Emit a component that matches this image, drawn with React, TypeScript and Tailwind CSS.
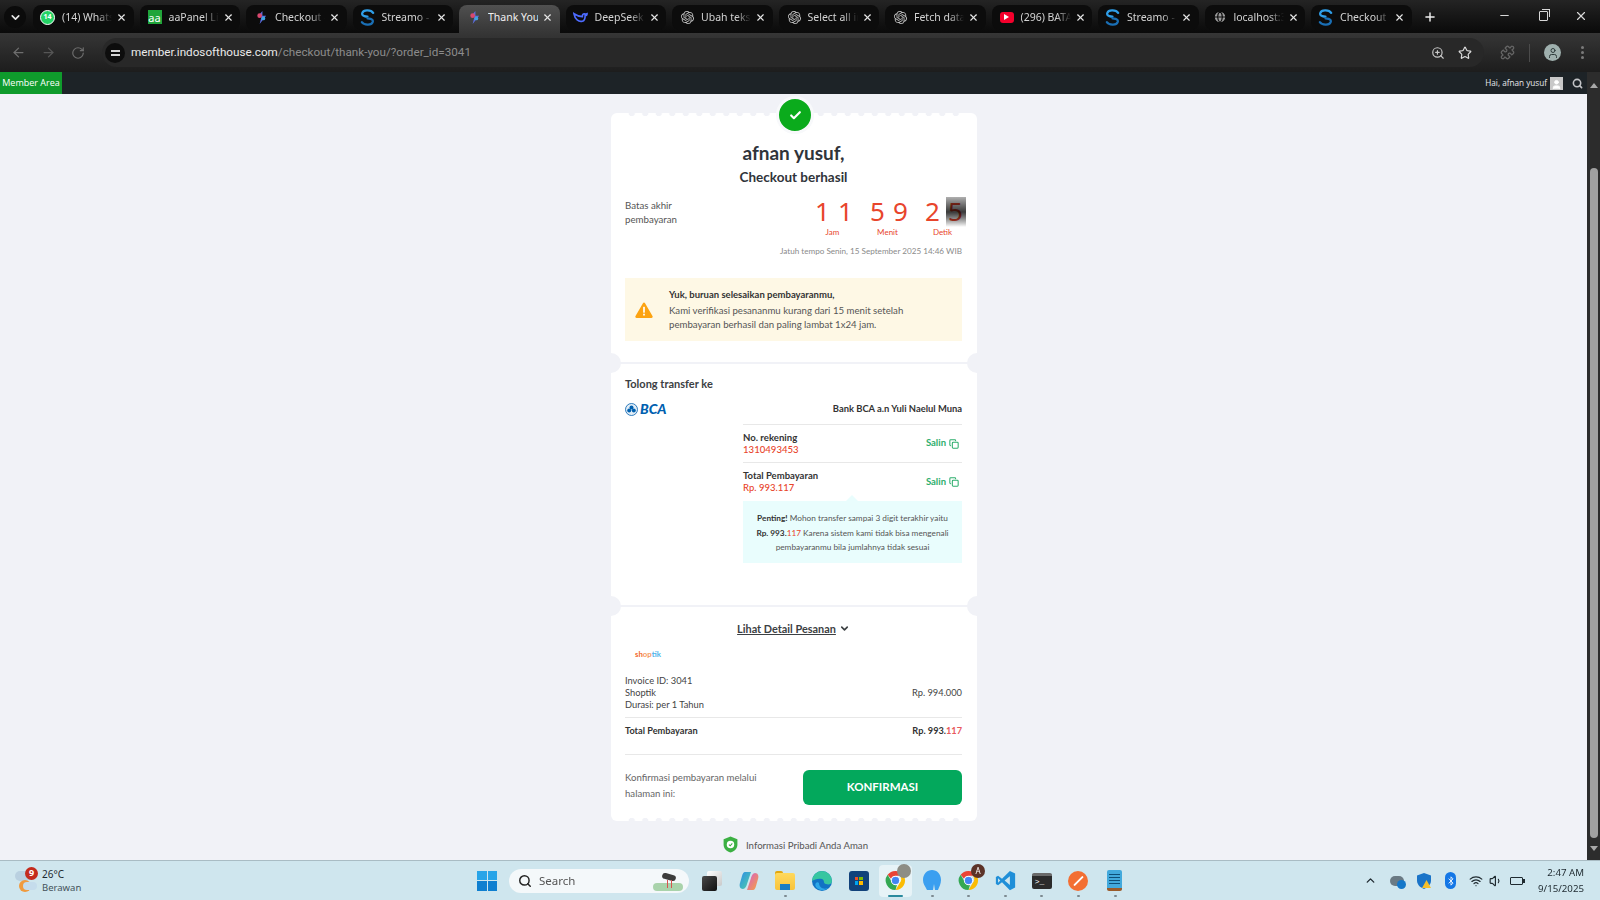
import React from "react";
import { ArrowLeft, ArrowRight, ChevronDown, ChevronUp, Copy, Globe, Plus, RotateCw, Search, Star, User, Volume1, Wifi, X, ZoomIn, Puzzle, Check, Bluetooth, Minus } from "lucide-react";
import { SiOpenai } from "react-icons/si";

const body = "font-['Lato','Noto_Sans',sans-serif]";

function ChromeIcon({ size = 24 }: { size?: number }) {
  return (
    <svg width={size} height={size} viewBox="0 0 48 48">
      <path d="M24 4a20 20 0 0 1 17.3 10H24a10 10 0 0 0-9.4 6.6L7.6 11.9A20 20 0 0 1 24 4z" fill="#ea4335" />
      <path d="M41.3 14A20 20 0 0 1 24 44l8.7-15a10 10 0 0 0 0-15z" fill="#fbbc04" />
      <path d="M7.6 11.9 16 26.6A10 10 0 0 0 27 33.5L24 44A20 20 0 0 1 7.6 11.9z" fill="#34a853" />
      <circle cx="24" cy="24" r="8.5" fill="#4285f4" stroke="#fff" strokeWidth="2" />
    </svg>
  );
}

function StreamoIcon() {
  return (
    <svg width="15" height="17" viewBox="0 0 16 18" fill="none">
      <path d="M14 4C12 1 4 0 2.5 4S8 8 8 8" stroke="#2f9ee8" strokeWidth="2.4" strokeLinecap="round" />
      <path d="M2 14c2 3 10 4 11.5 0S8 10 8 10" stroke="#1a6fb5" strokeWidth="2.4" strokeLinecap="round" />
    </svg>
  );
}

function CheckoutIcon() {
  return (
    <svg width="13" height="15" viewBox="0 0 14 16">
      <path d="M8 1 3 7h4l-2 8 7-9H8z" fill="#5b6ee1" />
      <circle cx="5" cy="6" r="2.5" fill="#d9486e" />
      <circle cx="9" cy="9" r="2" fill="#3da5e0" />
    </svg>
  );
}

const tabs: { title: string; icon: React.ReactNode; active?: boolean }[] = [
  {
    title: "(14) WhatsApp",
    icon: <div className="w-[15px] h-[15px] rounded-full bg-[#25d366] border-[1.5px] border-white flex items-center justify-center text-[7px] font-bold text-white">14</div>,
  },
  {
    title: "aaPanel Linux",
    icon: <div className="w-[14px] h-[14px] bg-[#20a53a] flex items-center justify-center text-[11px] leading-none text-white">aa</div>,
  },
  { title: "Checkout - Shoptik", icon: <CheckoutIcon /> },
  { title: "Streamo - Web", icon: <StreamoIcon /> },
  { title: "Thank You", icon: <CheckoutIcon />, active: true },
  {
    title: "DeepSeek",
    icon: (
      <svg width="15" height="13" viewBox="0 0 16 14" fill="none">
        <path d="M1 3c1 6 5 9 9 8 2-.5 3-3 3-6 1 0 2-1 2-2-1 .5-2 .5-3 0-1 0-2 1-2 3-2 0-6-1-9-3z" stroke="#4d6bfe" strokeWidth="1.8" />
      </svg>
    ),
  },
  { title: "Ubah teks ke kode", icon: <SiOpenai size={13} color="#c4c4c4" /> },
  { title: "Select all in code", icon: <SiOpenai size={13} color="#c4c4c4" /> },
  { title: "Fetch data from", icon: <SiOpenai size={13} color="#c4c4c4" /> },
  {
    title: "(296) BATAS",
    icon: (
      <div className="w-[14px] h-[11px] bg-[#f5002c] rounded-[3px] flex items-center justify-center">
        <div className="w-0 h-0 border-y-[3px] border-y-transparent border-l-[5px] border-l-white" />
      </div>
    ),
  },
  { title: "Streamo - Web", icon: <StreamoIcon /> },
  { title: "localhost:3000", icon: <Globe size={14} color="#0b0b0b" fill="#9a9a9a" /> },
  { title: "Checkout Streamo", icon: <StreamoIcon /> },
];

const taskbarIcons: { icon: React.ReactNode; dot?: boolean; active?: boolean }[] = [
  {
    icon: (
      <div className="relative w-5 h-5">
        <div className="absolute left-[5px] top-0 w-[15px] h-[15px] rounded-[2px] bg-gradient-to-br from-white to-[#c9c9c9]" />
        <div className="absolute left-0 top-[5px] w-[15px] h-[15px] rounded-[2px] bg-gradient-to-br from-[#4a4a4a] to-[#111]" />
      </div>
    ),
  },
  {
    icon: (
      <svg width="22" height="22" viewBox="0 0 22 22">
        <defs>
          <linearGradient id="cp1" x1="0" y1="0" x2="1" y2="1"><stop offset="0" stopColor="#2c8ee8" /><stop offset="1" stopColor="#53d1a5" /></linearGradient>
          <linearGradient id="cp2" x1="0" y1="0" x2="1" y2="1"><stop offset="0" stopColor="#d65ad0" /><stop offset="1" stopColor="#f6a43b" /></linearGradient>
        </defs>
        <path d="M7 2h6l-4 12c-.5 2-2 5-4 5-3 0-4-3-3-6l2-7c.5-2 1.500-4 3-4z" fill="url(#cp1)" />
        <path d="M15 20H9l4-12c.5-2 2-5 4-5 3 0 4 3 3 6l-2 7c-.5 2-1.500 4-3 4z" fill="url(#cp2)" />
      </svg>
    ),
  },
  {
    dot: true,
    icon: (
      <div className="relative w-5 h-[19px]">
        <div className="absolute top-0 left-0 w-2 h-1 rounded-t-[2px] bg-[#e2a70f]" />
        <div className="absolute top-[2px] left-0 w-5 h-[17px] rounded-[2px] bg-gradient-to-b from-[#ffd95c] to-[#f8c33a]" />
        <div className="absolute bottom-0 left-[5px] w-[10px] h-[6px] bg-[#1a7dc4]" />
      </div>
    ),
  },
  {
    icon: (
      <svg width="22" height="22" viewBox="0 0 22 22">
        <circle cx="11" cy="11" r="10" fill="#1173c4" />
        <path d="M1 11a10 10 0 0 1 20 0c0 3-3 4-6 3-3 0-1-4-4-5-4-1-8 1-10 2z" fill="#37c6a0" />
        <path d="M8 13c0 4 4 7 9 5-3 3-9 3-12-1-2-3 1-6 3-4z" fill="#2ca7e8" />
      </svg>
    ),
  },
  {
    icon: (
      <div className="w-5 h-5 rounded-[3px] bg-[#11427b] flex items-center justify-center">
        <div className="grid grid-cols-2 gap-px w-2 h-2">
          <div className="bg-[#f25022]" />
          <div className="bg-[#7fba00]" />
          <div className="bg-[#00a4ef]" />
          <div className="bg-[#ffb900]" />
        </div>
      </div>
    ),
  },
  {
    active: true,
    icon: (
      <div className="relative">
        <ChromeIcon size={23} />
        <div className="absolute -top-[5px] -right-[4px] w-[14px] h-[14px] rounded-full bg-[#8d8d85]" />
      </div>
    ),
  },
  {
    dot: true,
    icon: (
      <svg width="20" height="24" viewBox="0 0 20 24">
        <path d="M10 1c5 0 9 4 9 10 0 4-2 7-3 10h-3l-1-6-1 6H5C3 17 1 15 1 11 1 5 5 1 10 1z" fill="#3b9ff0" />
      </svg>
    ),
  },
  {
    dot: true,
    icon: (
      <div className="relative">
        <ChromeIcon size={23} />
        <div className="absolute -top-[5px] -right-[5px] w-[14px] h-[14px] rounded-full bg-[#5b3328] flex items-center justify-center text-[8px] text-white">A</div>
      </div>
    ),
  },
  {
    dot: true,
    icon: (
      <svg width="21" height="21" viewBox="0 0 24 24">
        <path d="M17 1 8 10 3.500 6.500 1 8v8l2.500 1.500L8 14l9 9 6-3V4z" fill="#1f8fd8" />
        <path d="M17 7v10l-6-5z" fill="#cfe6ee" />
        <path d="M3.500 9.500v5L6 12z" fill="#cfe6ee" />
      </svg>
    ),
  },
  {
    dot: true,
    icon: (
      <div className="w-5 h-[16px] rounded-[2px] bg-[#2b2b2b] border-t-[3px] border-[#6a6a6a] flex items-center px-[3px] text-[8px] leading-none text-white font-mono">
        &gt;_
      </div>
    ),
  },
  {
    dot: true,
    icon: (
      <div className="w-5 h-5 rounded-full bg-[#f36f33] flex items-center justify-center">
        <div className="w-[13px] h-[2px] bg-white rotate-[-45deg] rounded" />
      </div>
    ),
  },
  {
    dot: true,
    icon: (
      <div className="w-[15px] h-[21px] rounded-[2px] bg-[#42a9dc] flex flex-col justify-end gap-[2px] pb-[4px] px-[2px] border-b-[3px] border-[#9a5b2a]">
        <div className="h-px bg-[#0d4f78]" />
        <div className="h-px bg-[#0d4f78]" />
        <div className="h-px bg-[#0d4f78]" />
        <div className="h-px bg-[#0d4f78]" />
      </div>
    ),
  },
];

function TabStrip() {
  return (
    <div className="h-[33px] flex items-end bg-gradient-to-b from-[#242424] to-[#0a0a0a] font-['Noto_Sans',sans-serif]">
      <div className="w-[30px] h-[28px] pb-[4px] flex items-center justify-center">
        <div className="w-[22px] h-[22px] rounded-full bg-[#0b0b0b] flex items-center justify-center">
          <ChevronDown size={13} strokeWidth={3} color="#e6e6e6" />
        </div>
      </div>
      {tabs.map((tab, i) => (
        <div key={i} className="w-[106.5px] h-[28px] relative flex items-center pb-[4px]">
          <div className={tab.active ? "absolute inset-x-[3px] inset-y-0 rounded-t-lg bg-gradient-to-b from-[#505050] to-[#363636]" : "absolute inset-x-[3px] top-0 bottom-[3px] rounded-lg bg-[#0c0c0c]"} />
          <div className="relative w-[28px] flex items-center justify-end pr-[3px]">{tab.icon}</div>
          <div className={`relative ml-[4px] w-[50px] overflow-hidden whitespace-nowrap text-[10.5px] leading-[14px] ${tab.active ? "text-[#f0f0f0]" : "text-[#d4d4d4] [mask-image:linear-gradient(to_right,black_70%,transparent)]"}`}>
            {tab.title}
          </div>
          <div className="relative ml-[4px]">
            <X size={11} strokeWidth={2.5} color="#e5e5e5" />
          </div>
        </div>
      ))}
      <div className="h-[28px] w-[30px] pb-[4px] flex items-center justify-center">
        <Plus size={14} strokeWidth={2.5} color="#eeeeee" />
      </div>
      <div className="ml-auto h-full flex items-center text-[#d8d8d8] pb-[2px]">
        <div className="w-[39px] flex justify-center"><Minus size={13} /></div>
        <div className="w-[38px] flex justify-center">
          <div className="relative w-[9px] h-[10px] border border-[#d8d8d8] rounded-[1px]">
            <div className="absolute -top-[3px] -right-[3px] w-[8px] h-[8px] border-t border-r border-[#d8d8d8]" />
          </div>
        </div>
        <div className="w-[38px] flex justify-center"><X size={14} /></div>
      </div>
    </div>
  );
}

function Toolbar() {
  return (
    <div className="h-[39px] flex items-center bg-gradient-to-b from-[#363636] to-[#1d1d1d] font-['Roboto',sans-serif]">
      <div className="w-[102px] flex items-center pl-[11px] gap-[15px]">
        <ArrowLeft size={15} color="#6e6e6e" />
        <ArrowRight size={15} color="#565656" />
        <RotateCw size={14} color="#6e6e6e" />
      </div>
      <div className="w-[1382px] h-[29px] rounded-full bg-[#282828] flex items-center pl-[2px]">
        <div className="w-[20px] h-[20px] ml-[1px] rounded-full bg-[#0d0d0d] flex flex-col items-center justify-center gap-[2px]">
          <div className="w-[9px] h-[2px] bg-[#d6d6d6]" />
          <div className="w-[9px] h-[2px] bg-[#d6d6d6]" />
        </div>
        <div className="ml-[6px] text-[11.7px] text-[#8c8c8c]">
          <span className="text-[#eaeaea]">member.indosofthouse.com</span>/checkout/thank-you/?order_id=3041
        </div>
        <div className="ml-auto flex items-center gap-[13px] pr-[12px]">
          <ZoomIn size={14} color="#c9c9c9" />
          <Star size={14} color="#dcdcdc" />
        </div>
      </div>
      <div className="flex items-center">
        <div className="ml-[16px]"><Puzzle size={15} color="#666666" /></div>
        <div className="ml-[14px] w-px h-[18px] bg-[#4b4b4b]" />
        <div className="ml-[14px] w-[17px] h-[17px] rounded-full bg-[#9fb0ae] flex items-center justify-center">
          <User size={12} color="#2d3a3a" />
        </div>
        <div className="ml-[20px] flex flex-col gap-[2px]">
          <div className="w-[3px] h-[3px] rounded-full bg-[#7a7a7a]" />
          <div className="w-[3px] h-[3px] rounded-full bg-[#7a7a7a]" />
          <div className="w-[3px] h-[3px] rounded-full bg-[#7a7a7a]" />
        </div>
      </div>
    </div>
  );
}

function AdminBar() {
  return (
    <div className="h-[22px] flex items-center bg-[#1d2327] font-['Open_Sans',sans-serif]">
      <div className="w-[62px] h-full bg-[#0f9b2c] flex items-center justify-center text-[9px] text-white">Member Area</div>
      <div className="ml-auto flex items-center text-[8.2px] text-[#e8eaec]">
        Hai, afnan yusuf
        <div className="ml-[3px] w-[13px] h-[13px] bg-[#c8c8c8] flex items-end justify-center overflow-hidden">
          <User size={11} color="#ffffff" fill="#ffffff" />
        </div>
        <div className="ml-[9px] mr-[4px]">
          <Search size={11} strokeWidth={3.5} color="#c3c4c7" />
        </div>
      </div>
    </div>
  );
}

function Digit({ value }: { value: string }) {
  return <div className="w-[23px] text-center text-[26px] leading-[28px] text-[#e8452c] font-['Noto_Sans',sans-serif]">{value}</div>;
}

function TimerUnit({ a, b, label }: { a: string; b: string; label: string }) {
  return (
    <div className="w-[46px] flex flex-col items-center">
      <div className="flex">
        <Digit value={a} />
        <Digit value={b} />
      </div>
      <div className="mt-px pr-[3px] text-[8px] leading-[12px] text-[#e8452c]">{label}</div>
    </div>
  );
}

function Notch({ side }: { side: "left" | "right" }) {
  return (
    <div className={side === "left" ? "absolute -left-[10px] -top-[11px] w-5 h-5 rounded-full bg-[#f1f2f7]" : "absolute -right-[10px] -top-[11px] w-5 h-5 rounded-full bg-[#f1f2f7]"} />
  );
}

function Scallop({ edge }: { edge: "top" | "bottom" }) {
  return (
    <div className={edge === "top" ? "absolute top-0 inset-x-[14px] h-[3px] bg-[radial-gradient(circle_at_50%_0,#f1f2f7_3px,transparent_3.5px)] bg-[length:13.5px_3px]" : "absolute bottom-0 inset-x-[14px] h-[3px] bg-[radial-gradient(circle_at_50%_100%,#f1f2f7_3px,transparent_3.5px)] bg-[length:13.5px_3px]"} />
  );
}

function SalinButton() {
  return (
    <div className="flex items-center gap-[3px] pr-[3px] text-[9.5px] font-bold text-[#2eae6d]">
      Salin
      <Copy size={10} strokeWidth={2.5} />
    </div>
  );
}

function Page() {
  return (
    <div className={`flex-1 overflow-hidden bg-[#f1f2f7] pl-px pt-[19px] ${body} text-[#3c4043]`}>
      <div className="relative w-[366px] mx-auto">
        {/* Status check */}
        <div className="absolute left-[165px] -top-[17px] z-10 w-[38px] h-[38px] rounded-full border-[3px] border-[#f8f9fb] bg-[#0bab1c] flex items-center justify-center">
          <Check size={13} strokeWidth={4} color="#ffffff" />
        </div>

        {/* Countdown */}
        <div className="relative bg-white rounded-t-md pl-[14px] pr-[15px] pt-[28px] pb-[21px]">
          <Scallop edge="top" />
          <div className="text-center text-[19px] leading-[24px] font-bold text-[#30343a]">afnan yusuf,</div>
          <div className="mt-[2px] text-center text-[13.5px] leading-[20px] font-bold text-[#30343a]">Checkout berhasil</div>
          <div className="mt-[10px] flex justify-between">
            <div className="pt-px text-[9.7px] leading-[14px] text-[#555555]">
              Batas akhir
              <br />
              pembayaran
            </div>
            <div className="relative flex gap-[9px] -mr-[5px]">
              <TimerUnit a="1" b="1" label="Jam" />
              <TimerUnit a="5" b="9" label="Menit" />
              <TimerUnit a="2" b="5" label="Detik" />
              <div className="absolute right-[1px] top-0 w-[20px] h-[30px] mix-blend-multiply bg-gradient-to-b from-[#b0b0b0] via-[#3a3a3a] to-white" />
            </div>
          </div>
          <div className="mt-[7px] text-right text-[8.15px] leading-[12px] text-[#8a8a8a]">Jatuh tempo Senin, 15 September 2025 14:46 WIB</div>
          <div className="mt-[21px] bg-[#fef8e5] flex items-center py-[10px]">
            <div className="w-[36px] pl-[1px] mr-[8px] flex justify-center">
              <svg width="18" height="16" viewBox="0 0 17 15">
                <path d="M8.500.5a1.200 1.200 0 0 1 1 .6l7 12a1.200 1.200 0 0 1-1 1.900h-14a1.200 1.200 0 0 1-1-1.900l7-12a1.200 1.200 0 0 1 1-.6z" fill="#fca311" />
                <rect x="7.700" y="4.500" width="1.600" height="5.500" fill="#fff" />
                <rect x="7.700" y="11" width="1.600" height="1.700" fill="#fff" />
              </svg>
            </div>
            <div className="text-[9.65px] leading-[14px] text-[#555555]">
              <div className="font-bold text-[9.5px] text-[#333333] mb-px">Yuk, buruan selesaikan pembayaranmu,</div>
              <div>Kami verifikasi pesananmu kurang dari 15 menit setelah</div>
              <div>pembayaran berhasil dan paling lambat 1x24 jam.</div>
            </div>
          </div>
        </div>

        {/* Transfer */}
        <div className="relative mt-[2px] bg-white pl-[14px] pr-[15px] pt-[12px] pb-[42px]">
          <Notch side="left" />
          <Notch side="right" />
          <div className="text-[11px] leading-[16px] font-bold text-[#3c4043]">Tolong transfer ke</div>
          <div className="mt-[9px] h-4 flex items-center justify-between">
            <div className="flex items-center gap-[2px]">
              <svg width="13" height="13" viewBox="0 0 13 13">
                <circle cx="6.500" cy="6.500" r="6" fill="#e3eef7" stroke="#0060af" strokeWidth="0.8" />
                <circle cx="6.500" cy="4.500" r="2" fill="#0060af" />
                <circle cx="4.200" cy="7.500" r="2" fill="#0060af" />
                <circle cx="8.800" cy="7.500" r="2" fill="#0060af" />
              </svg>
              <div className="text-[14px] italic font-black leading-none text-[#0060af]">BCA</div>
            </div>
            <div className="text-[9.4px] font-bold text-[#333333]">Bank BCA a.n Yuli Naelul Muna</div>
          </div>
          <div className="mt-[7px] ml-[118px]">
            <div className="border-t border-[#e8e8e8] py-[7px] flex items-center justify-between">
              <div className="text-[9.6px]">
                <div className="leading-[12px] font-bold text-[#333333]">No. rekening</div>
                <div className="leading-[11px] text-[#e8452c] font-medium">1310493453</div>
              </div>
              <SalinButton />
            </div>
            <div className="border-t border-[#e8e8e8] pt-[7px] flex items-center justify-between">
              <div className="text-[9.5px] leading-[12px]">
                <div className="font-bold text-[#333333]">Total Pembayaran</div>
                <div className="text-[#e8452c] font-medium">Rp. 993.117</div>
              </div>
              <SalinButton />
            </div>
            <div className="relative mt-[7px] bg-[#e9fdfd] pt-[10px] pb-[8px] text-center text-[8.25px] leading-[14.5px] text-[#555555] whitespace-nowrap">
              <div className="absolute left-[103px] -top-[6px] w-0 h-0 border-x-[6px] border-x-transparent border-b-[6px] border-b-[#e9fdfd]" />
              <b className="text-[#333333]">Penting!</b> Mohon transfer sampai 3 digit terakhir yaitu
              <br />
              <b className="text-[#333333]">Rp. 993.</b>
              <span className="text-[#e8452c]">117</span> Karena sistem kami tidak bisa mengenali
              <br />
              pembayaranmu bila jumlahnya tidak sesuai
            </div>
          </div>
        </div>

        {/* Order detail */}
        <div className="relative mt-[2px] bg-white rounded-b-md pl-[14px] pr-[15px] pt-[14px] pb-[16px]">
          <Notch side="left" />
          <Notch side="right" />
          <Scallop edge="bottom" />
          <div className="flex items-center justify-center gap-[3px] text-[10.9px] leading-[16px] font-bold text-[#3c4043]">
            <span className="underline">Lihat Detail Pesanan </span>
            <ChevronDown size={11} strokeWidth={3.5} />
          </div>
          <div className="mt-[11px] pl-[10px] text-[7.8px] leading-[12px] font-bold text-[#f26a2e]">
            sh<span className="text-[#f59a5f]">op</span>
            <span className="text-[#4eb3ea]">tik</span>
          </div>
          <div className="mt-[15px] flex items-center justify-between text-[9.3px] leading-[12px] text-[#444444]">
            <div>
              <div>Invoice ID: 3041</div>
              <div>Shoptik</div>
              <div>Durasi: per 1 Tahun</div>
            </div>
            <div>Rp. 994.000</div>
          </div>
          <div className="mt-[6px] border-t border-[#e8e8e8] pt-[6px] flex justify-between text-[9.2px] leading-[14px] font-bold text-[#333333]">
            <div>Total Pembayaran</div>
            <div>
              Rp. 993.<span className="text-[#e8595b]">117</span>
            </div>
          </div>
          <div className="mt-[16px] border-t border-[#e8e8e8] pt-[15px] flex justify-between">
            <div className="-mt-px text-[9.65px] leading-[16.5px] text-[#666666]">
              Konfirmasi pembayaran melalui
              <br />
              halaman ini:
            </div>
            <div className="w-[159px] h-[35px] rounded-md bg-[#03a85c] flex items-center justify-center text-[11.5px] font-bold text-white">KONFIRMASI</div>
          </div>
        </div>

        {/* Footer */}
        <div className="mt-[14px] pl-[3px] flex items-center justify-center gap-[8px] text-[9.65px] leading-[20px] text-[#555555]">
          <svg width="15" height="17" viewBox="0 0 14 16">
            <path d="M7 .5 13.500 3v5c0 3.500-2.500 6.500-6.500 7.500C3 14.500.5 11.500.5 8V3z" fill="#3cb043" />
            <circle cx="7" cy="8" r="3.500" fill="#ffffff" />
            <path d="M5.500 8.200 6.700 9.200 8.700 7" stroke="#3cb043" fill="none" />
          </svg>
          Informasi Pribadi Anda Aman
        </div>
      </div>
    </div>
  );
}

function Scrollbar() {
  return (
    <div className="w-[13px] h-full bg-[#2c2c2c] flex flex-col items-center">
      <div className="h-[16px] flex items-end">
        <div className="w-0 h-0 border-x-[4px] border-x-transparent border-b-[5px] border-b-[#a8a8a8]" />
      </div>
      <div className="mt-[80px] w-[8px] h-[670px] rounded-full bg-[#a0a0a0]" />
      <div className="mt-[8px] w-0 h-0 border-x-[4px] border-x-transparent border-t-[5px] border-t-[#a8a8a8]" />
    </div>
  );
}

function Taskbar() {
  return (
    <div className="h-[40px] flex items-center bg-[#cfe6ee] border-t border-[#a9bcc4] font-['Noto_Sans',sans-serif] text-[#1f2a30]">
      <div className="w-[469px] pl-[15px] flex items-center">
        <div className="relative w-[26px] h-[24px]">
          <div className="absolute left-0 top-[2px] w-[16px] h-[10px] rounded-full bg-[#b9d0e0]" />
          <div className="absolute left-[4px] top-[11px] w-[12px] h-[12px] rounded-full bg-[#f09a3e]" />
          <div className="absolute left-[8px] top-[13px] w-[14px] h-[8px] rounded-full bg-[#c5dcec]" />
          <div className="absolute left-[10px] -top-[2px] w-[13px] h-[13px] rounded-full bg-[#c42b1c] flex items-center justify-center text-[9px] font-bold text-white">9</div>
        </div>
        <div className="ml-[1px] leading-[14px]">
          <div className="text-[10px]">26°C</div>
          <div className="text-[9.500px] text-[#44525a]">Berawan</div>
        </div>
      </div>
      <div className="w-[36px] flex justify-center">
        <div className="grid grid-cols-2 gap-[1px] w-[20px] h-[20px]">
          <div className="bg-[#27a4e8]" />
          <div className="bg-[#27a4e8]" />
          <div className="bg-[#0f7fd0]" />
          <div className="bg-[#0f7fd0]" />
        </div>
      </div>
      <div className="ml-[4px] w-[180px] h-[24px] rounded-full bg-[#f4f8fa] flex items-center pl-[9px]">
        <Search size={14} strokeWidth={2.5} color="#222222" />
        <span className="ml-[7px] text-[11.5px] text-[#555555]">Search</span>
        <div className="ml-auto mr-[6px] relative w-[30px] h-[20px]">
          <div className="absolute bottom-0 inset-x-0 h-[8px] rounded bg-[#a9d3ab]" />
          <div className="absolute left-[9px] top-[3px] w-[14px] h-[6px] rounded-full bg-[#3c3c3c] rotate-[15deg]" />
          <div className="absolute left-[14px] top-[9px] w-px h-[8px] bg-[#d9534f]" />
          <div className="absolute left-[18px] top-[9px] w-px h-[8px] bg-[#d9534f]" />
        </div>
      </div>
      <div className="ml-[5px] h-full flex">
        {taskbarIcons.map((item, i) => (
          <div key={i} className="relative w-[36.6px] h-full flex items-center justify-center">
            {item.active && <div className="absolute inset-x-[2px] top-[4px] bottom-[3px] rounded bg-white/50" />}
            {item.active && <div className="absolute bottom-[3px] left-[11px] w-[15px] h-[2px] rounded bg-[#2a8a9e]" />}
            {item.dot && <div className="absolute bottom-[3px] left-[17px] w-[3px] h-[2px] rounded bg-[#7d8a90]" />}
            <div className="relative">{item.icon}</div>
          </div>
        ))}
      </div>
      <div className="ml-auto flex items-center pr-[16px]">
        <ChevronUp size={13} strokeWidth={2.5} />
        <div className="ml-[13px] relative w-[14px] h-[10px] rounded-full bg-[#6a7a84]">
          <div className="absolute -right-[2px] -bottom-[3px] w-[9px] h-[9px] rounded-full bg-[#1477c9]" />
        </div>
        <svg className="ml-[13px]" width="14" height="16" viewBox="0 0 14 16">
          <path d="M7 0 14 2.500v5c0 4-3 7-7 8.500-4-1.500-7-4.500-7-8.500v-5z" fill="#1a74c8" />
          <path d="M9.500 7 14 15H5z" fill="#f5c02c" />
        </svg>
        <div className="ml-[14px] w-[11px] h-[17px] rounded-full bg-[#1477e6] flex items-center justify-center">
          <Bluetooth size={10} color="#ffffff" />
        </div>
        <Wifi className="ml-[13px]" size={14} />
        <Volume1 className="ml-[6px]" size={14} />
        <div className="ml-[7px] relative w-[13px] h-[8px] border border-[#1f2a30] rounded-[1px]">
          <div className="absolute -right-[3px] top-[1px] w-[2px] h-[4px] bg-[#1f2a30]" />
        </div>
        <div className="ml-[14px] w-[47px] text-right text-[9.700px] leading-[16px] whitespace-nowrap">
          <div>2:47 AM</div>
          <div>9/15/2025</div>
        </div>
      </div>
    </div>
  );
}

export default function App() {
  return (
    <div className="w-[1600px] h-[900px] flex flex-col overflow-hidden">
      <TabStrip />
      <Toolbar />
      <div className="flex-1 min-h-0 flex">
        <div className="flex-1 min-w-0 flex flex-col">
          <AdminBar />
          <Page />
        </div>
        <Scrollbar />
      </div>
      <Taskbar />
    </div>
  );
}
